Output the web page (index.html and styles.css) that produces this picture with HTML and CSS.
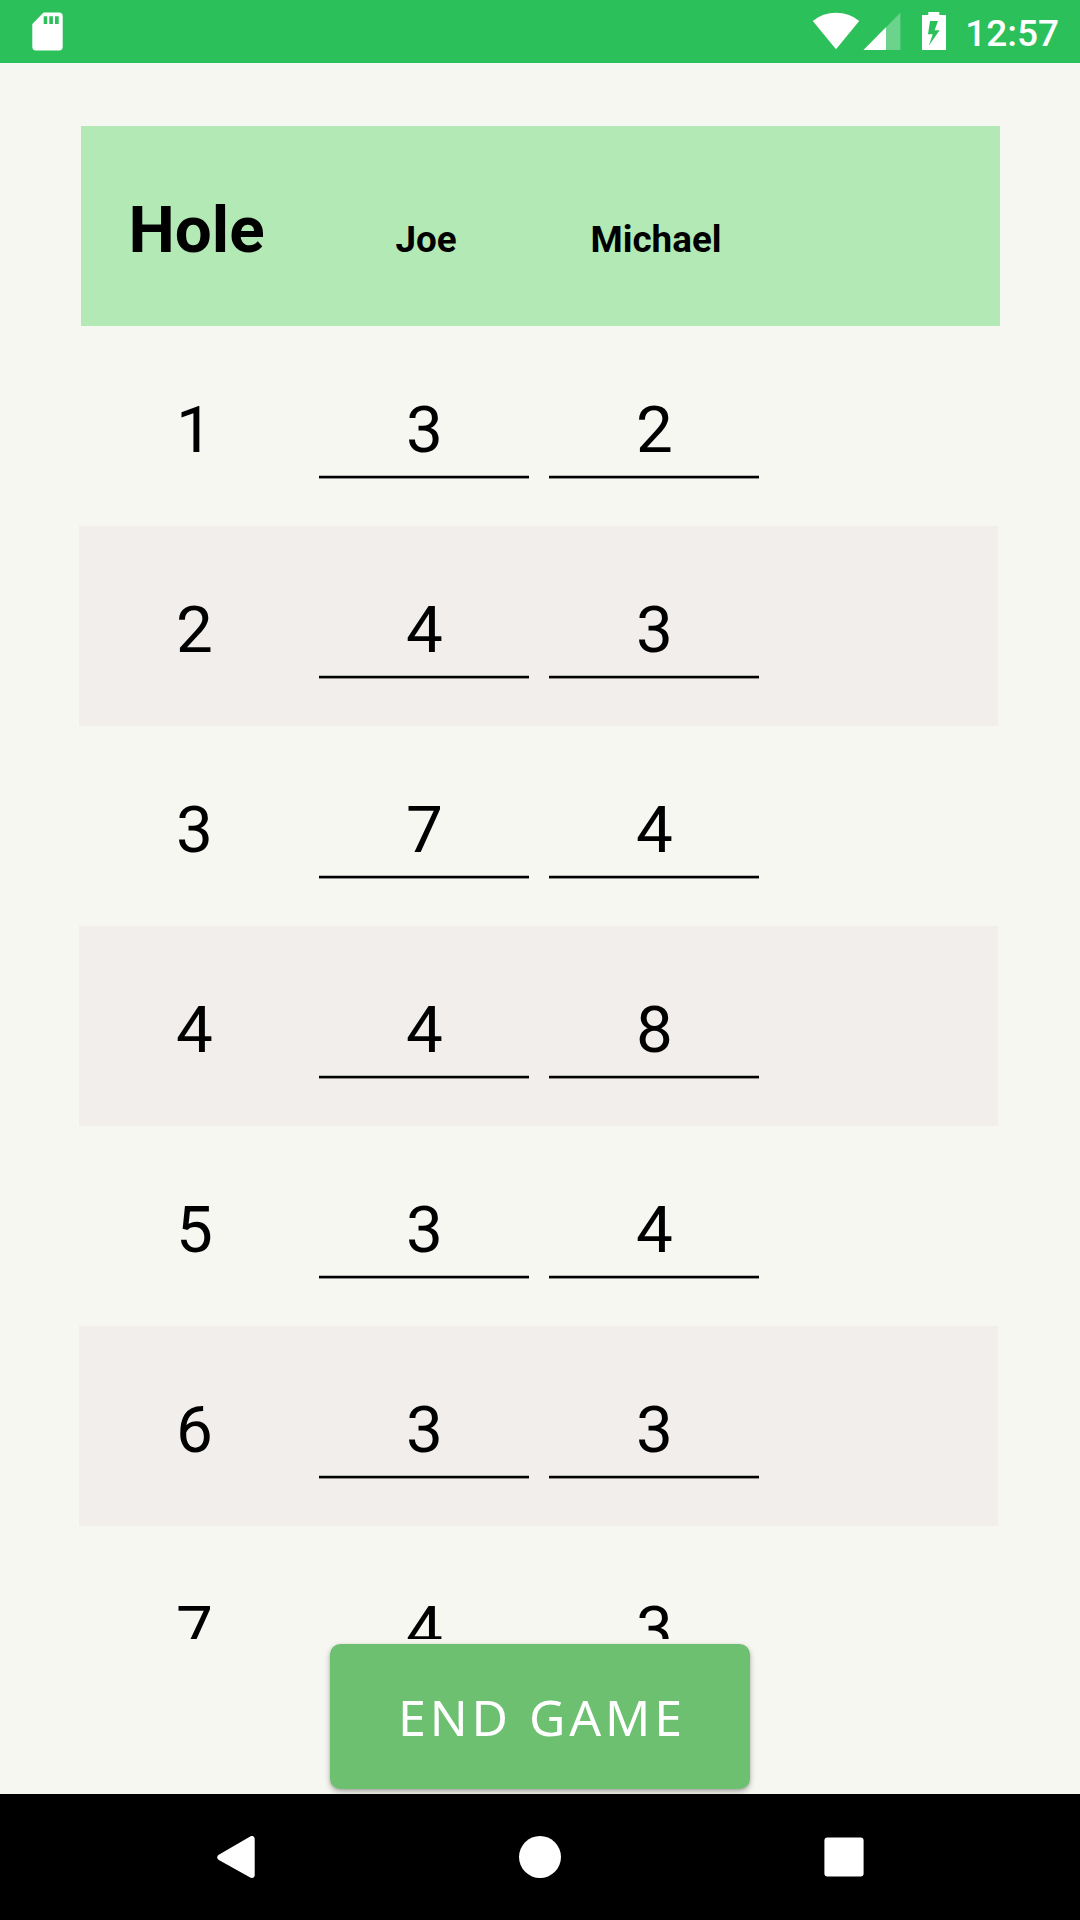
FILE: index.html
```html
<!DOCTYPE html>
<html lang="en">
<head>
<meta charset="utf-8">
<title>Scorecard</title>
<link rel="stylesheet" href="styles.css">
</head>
<body>
<div class="screen">
  <header class="status">
    <svg class="sd" width="31" height="39" viewBox="0 0 31 39"><path fill="#fff" fill-rule="evenodd" d="M11.5 0.5H27Q30.7 0.5 30.7 4.2V34.8Q30.7 38.5 27 38.5H4Q0.3 38.5 0.3 34.8V12ZM11.7 4.3V12H15.2V4.3ZM17.3 4.3V12H20.9V4.3ZM23 4.3V12H26.7V4.3Z"/></svg>
    <svg class="tray" width="134" height="39" viewBox="0 0 134 39">
      <path fill="#fff" d="M0.8 8.9Q10.8 0.8 24 0.8T47.2 8.9L24 37.2Z"/>
      <path fill="#fff" fill-opacity=".3" d="M88.4 0.8V38H51.5Z"/>
      <path fill="#fff" d="M74 15.3V38H51.5Z"/>
      <path fill="#fff" fill-rule="evenodd" d="M116.3 0H127.3V3H134V38H110V3H116.3ZM118 9L116 22.2H120.8L116.8 33.8L127.6 18.2H122.6L126 9Z"/>
    </svg>
    <time class="clock">12:57</time>
  </header>

  <main class="scores">
    <div class="row head"><b class="title">Hole</b><b>Joe</b><b>Michael</b></div>
    <div class="row"><span class="hole">1</span><span class="score">3</span><span class="score">2</span></div>
    <div class="row alt"><span class="hole">2</span><span class="score">4</span><span class="score">3</span></div>
    <div class="row"><span class="hole">3</span><span class="score">7</span><span class="score">4</span></div>
    <div class="row alt"><span class="hole">4</span><span class="score">4</span><span class="score">8</span></div>
    <div class="row"><span class="hole">5</span><span class="score">3</span><span class="score">4</span></div>
    <div class="row alt"><span class="hole">6</span><span class="score">3</span><span class="score">3</span></div>
    <div class="row"><span class="hole">7</span><span class="score">4</span><span class="score">3</span></div>
  </main>

  <div class="actions"><button class="end" type="button">END GAME</button></div>

  <nav class="nav">
    <svg width="38" height="42" viewBox="0 0 38 42"><path fill="#fff" stroke="#fff" stroke-width="6" stroke-linejoin="round" d="M34.7 3V39L3.3 21.3Z"/></svg>
    <svg width="42" height="42" viewBox="0 0 42 42"><circle cx="21" cy="21" r="21" fill="#fff"/></svg>
    <svg width="40" height="40" viewBox="0 0 40 40"><rect x=".4" y=".4" width="39.2" height="39.2" rx="3" fill="#fff"/></svg>
  </nav>
</div>
</body>
</html>
```
FILE: styles.css
```css
* { box-sizing: border-box; }
body { margin: 0; font-family: Roboto, sans-serif; color: #000; }
.screen {
  width: 1080px;
  height: 1920px;
  display: flex;
  flex-direction: column;
  overflow: hidden;
  background: #f6f7f1;
}
.status {
  flex: none;
  height: 63px;
  display: flex;
  align-items: flex-start;
  padding: 12px 21px 0 32px;
  background: #2cc05a;
  color: #fff;
}
.tray { margin-left: auto; margin-right: 19px; }
.clock { font-size: 37px; font-weight: 500; line-height: 43px; }

.scores {
  flex: none;
  height: 1576px;
  padding: 63px 82px 0 79px;
  overflow: hidden;
}
.row {
  width: 919px;
  height: 200px;
  display: grid;
  grid-template-columns: repeat(3, 230px);
  align-items: start;
  padding-top: 65px;
  font-size: 65.6px;
  line-height: 78px;
  text-align: center;
}
.alt { background: #f2eeeb; }
.head {
  margin-left: 2px;
  align-items: baseline;
  background: #b3e9b4;
  font-size: 36.8px;
}
.title { font-size: 65.6px; padding-left: 1px; }
.hole { padding-left: 1px; }
.score {
  height: 88px;
  margin: 0 10px;
  padding-left: 1px;
  background: linear-gradient(#b8b9b5 1px, #000 1px 3px, #8f908d 3px) bottom / 100% 4px no-repeat;
}

.actions {
  flex: none;
  height: 155px;
  padding-top: 5px;
  display: flex;
  justify-content: center;
  align-items: flex-start;
  overflow: hidden;
}
.end {
  width: 420px;
  height: 145px;
  padding: 0 0 0 4px;
  border: 0;
  border-radius: 10.5px;
  background: #6cc070;
  box-shadow: 0 3px 6px rgba(0, 0, 0, .26), 0 1px 3px rgba(0, 0, 0, .12);
  color: #fff;
  font: 400 50px/1 "Noto Sans", sans-serif;
  letter-spacing: 3.9px;
}

.nav {
  flex: none;
  height: 126px;
  display: flex;
  align-items: center;
  justify-content: space-between;
  padding: 0 216px 0 217px;
  background: #000;
}
```
